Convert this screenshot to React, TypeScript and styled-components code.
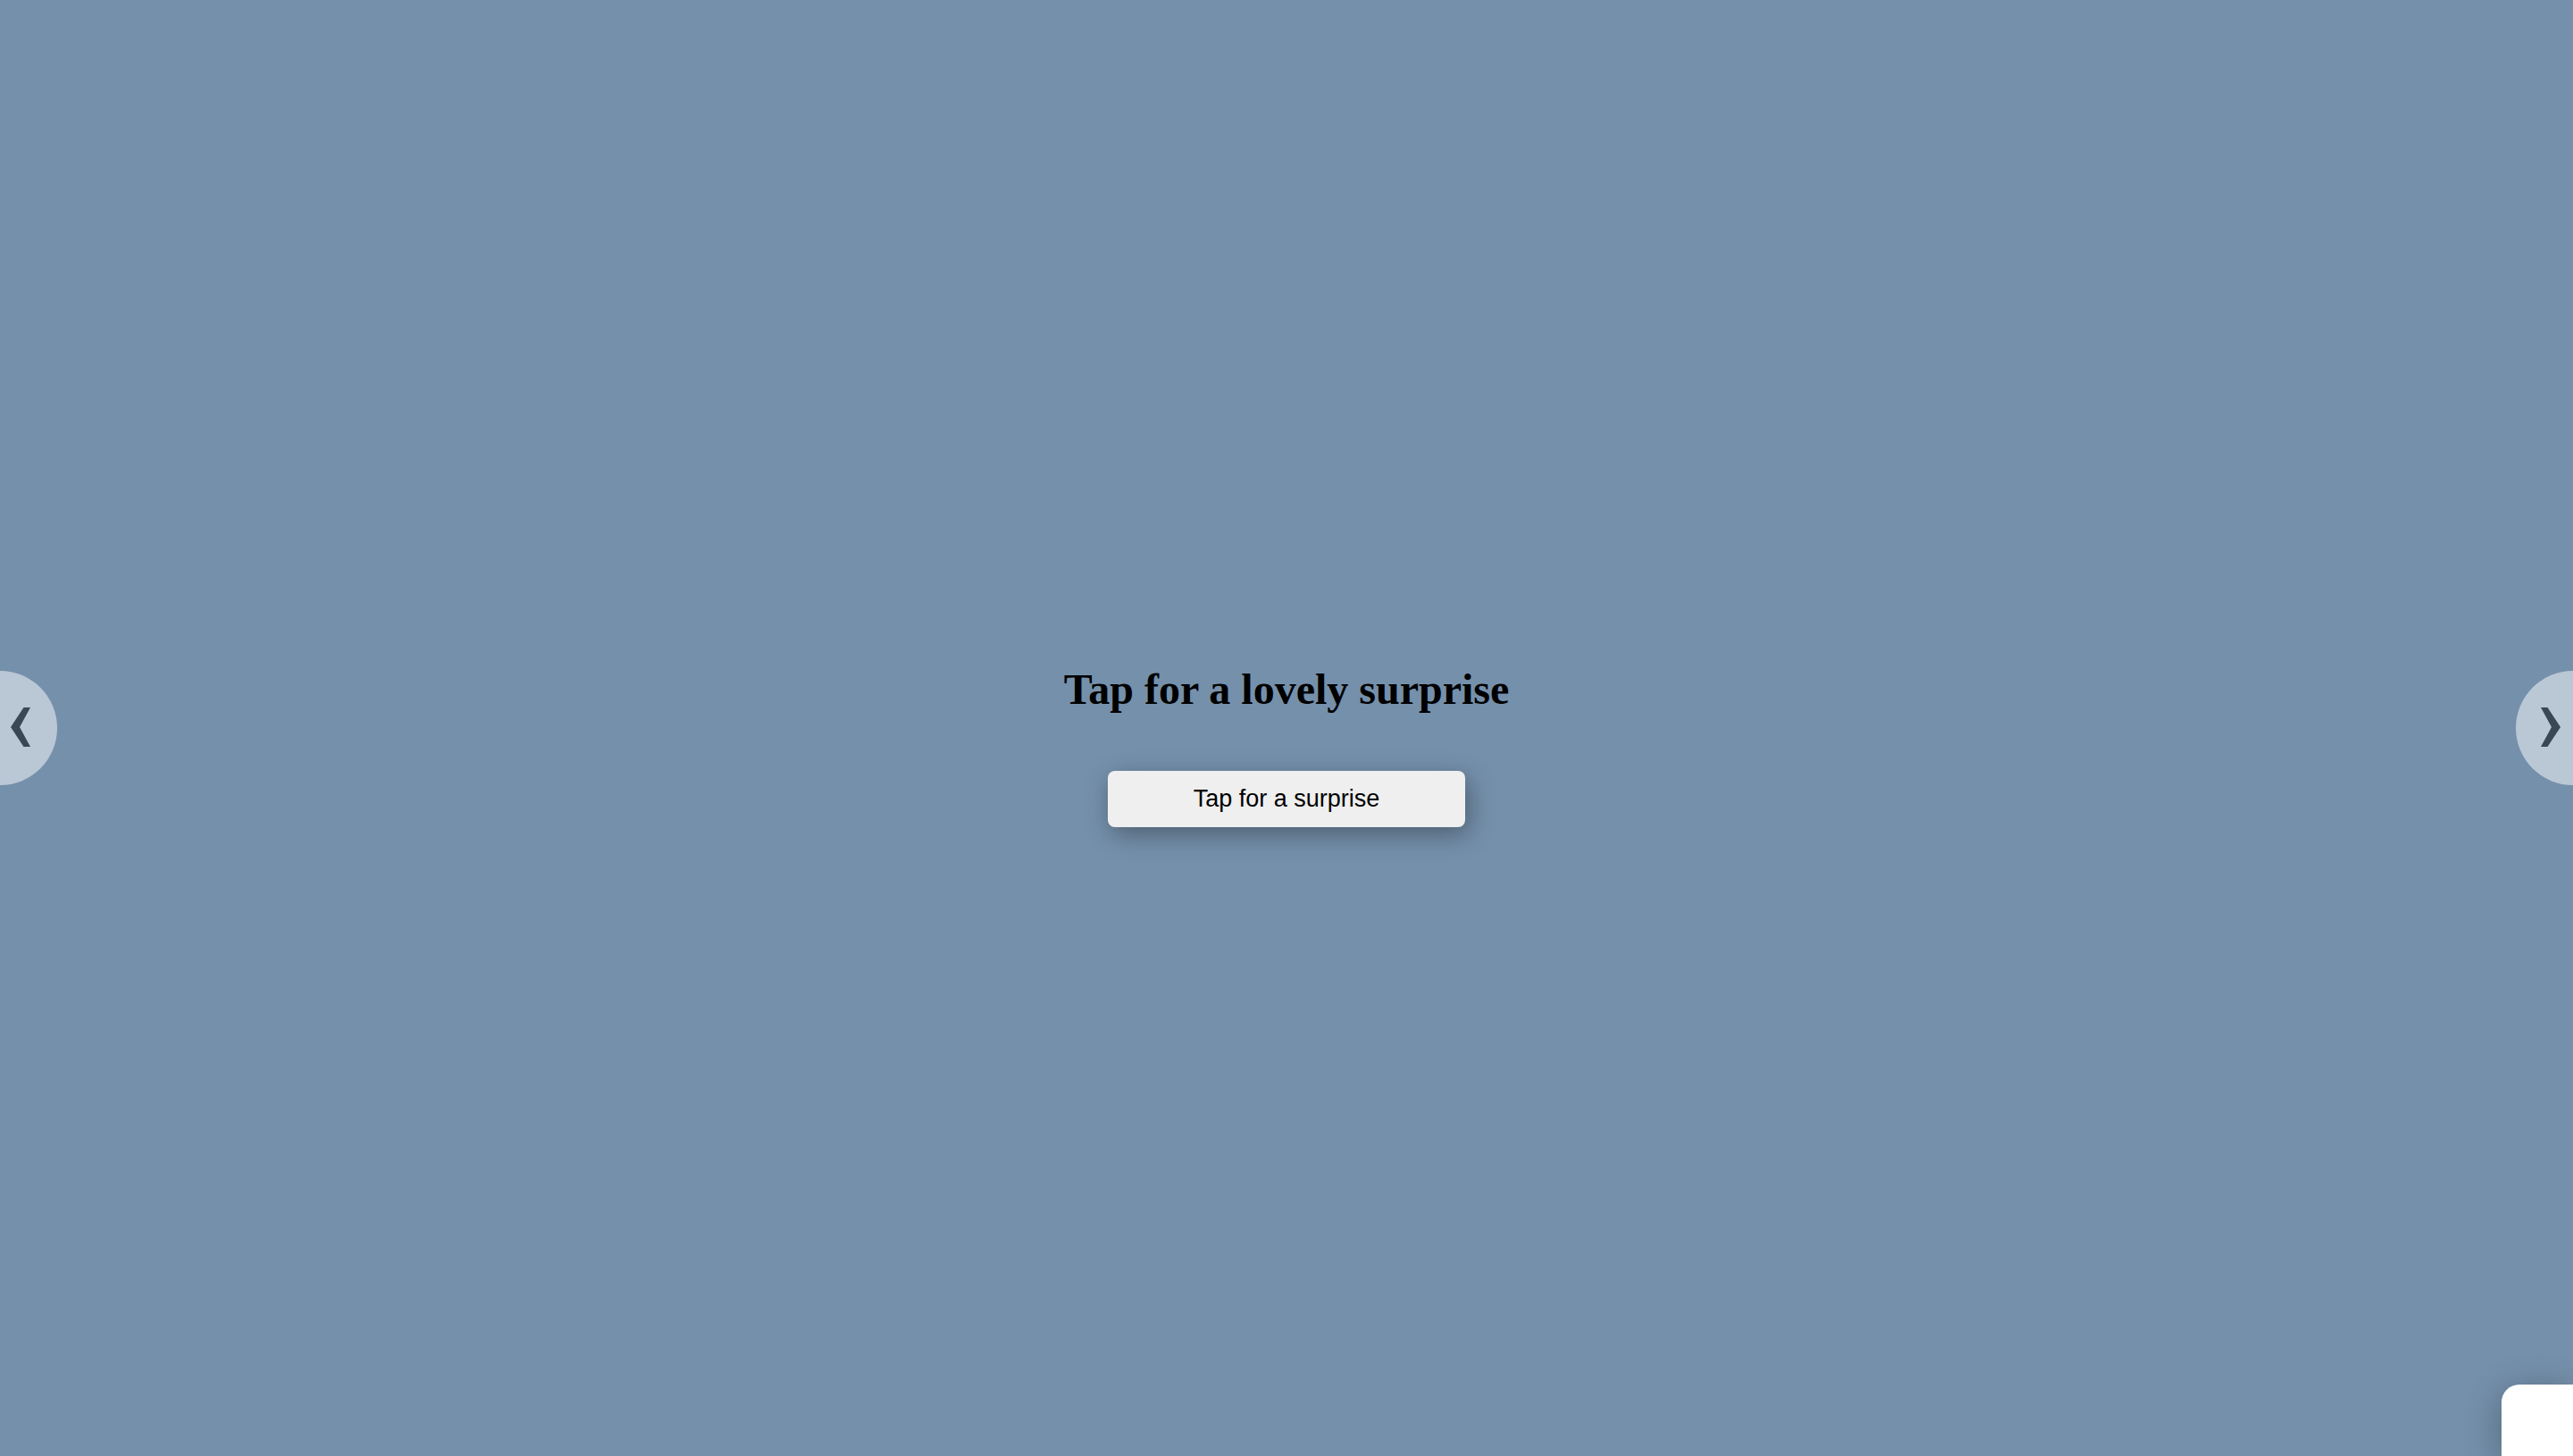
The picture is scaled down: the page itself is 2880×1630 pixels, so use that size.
import React from "react";
import styled, { createGlobalStyle } from "styled-components";

const GlobalStyle = createGlobalStyle`
  body {
    margin: 0;
    background: #7590ab;
    overflow: hidden;
  }
`;

const Page = styled.main`
  min-height: 100vh;
  display: flex;
  align-items: center;
  justify-content: space-between;
`;

const ArrowButton = styled.button<{ $side: "left" | "right" }>`
  width: 64px;
  height: 128px;
  box-sizing: border-box;
  display: flex;
  align-items: center;
  justify-content: ${(p) => (p.$side === "left" ? "flex-start" : "flex-end")};
  padding: ${(p) => (p.$side === "left" ? "0 0 2px 12px" : "0 14px 2px 0")};
  border: none;
  border-radius: ${(p) => (p.$side === "left" ? "0 64px 64px 0" : "64px 0 0 64px")};
  background: #bac7d5;
  color: #3a4855;
  cursor: pointer;
`;

const Content = styled.section`
  display: flex;
  flex-direction: column;
  align-items: center;
  gap: 64px;
  padding-top: 40px;
`;

const Title = styled.h2`
  margin: 0;
  color: #000;
  font: bold 48px / 54px "Liberation Serif", "Times New Roman", serif;
`;

const SurpriseButton = styled.button`
  width: 400px;
  height: 63px;
  border: none;
  border-radius: 8px;
  background: #efefef;
  color: #000;
  font: 27px / 31px "Liberation Sans", Arial, sans-serif;
  box-shadow: 4px 8px 28px rgba(0, 0, 0, 0.35);
  cursor: pointer;
`;

const CornerPanel = styled.aside`
  position: fixed;
  right: 0;
  bottom: 0;
  width: 80px;
  height: 80px;
  border-radius: 20px 0 0 0;
  background: #fff;
  box-shadow: 0 8px 40px rgba(0, 0, 0, 0.3);
`;

const Chevron = ({ points }: { points: string }) => (
  <svg width="22" height="44" viewBox="0 0 22 44" fill="currentColor" aria-hidden="true">
    <polygon points={points} />
  </svg>
);

export default function App() {
  return (
    <>
      <GlobalStyle />
      <Page>
        <ArrowButton $side="left" aria-label="Previous">
          <Chevron points="14.5,0 22,0 10,22 22,44 14.5,44 0,22" />
        </ArrowButton>
        <Content>
          <Title>Tap for a lovely surprise</Title>
          <SurpriseButton>Tap for a surprise</SurpriseButton>
        </Content>
        <ArrowButton $side="right" aria-label="Next">
          <Chevron points="0,0 7.5,0 22,22 7.5,44 0,44 12,22" />
        </ArrowButton>
      </Page>
      <CornerPanel />
    </>
  );
}
